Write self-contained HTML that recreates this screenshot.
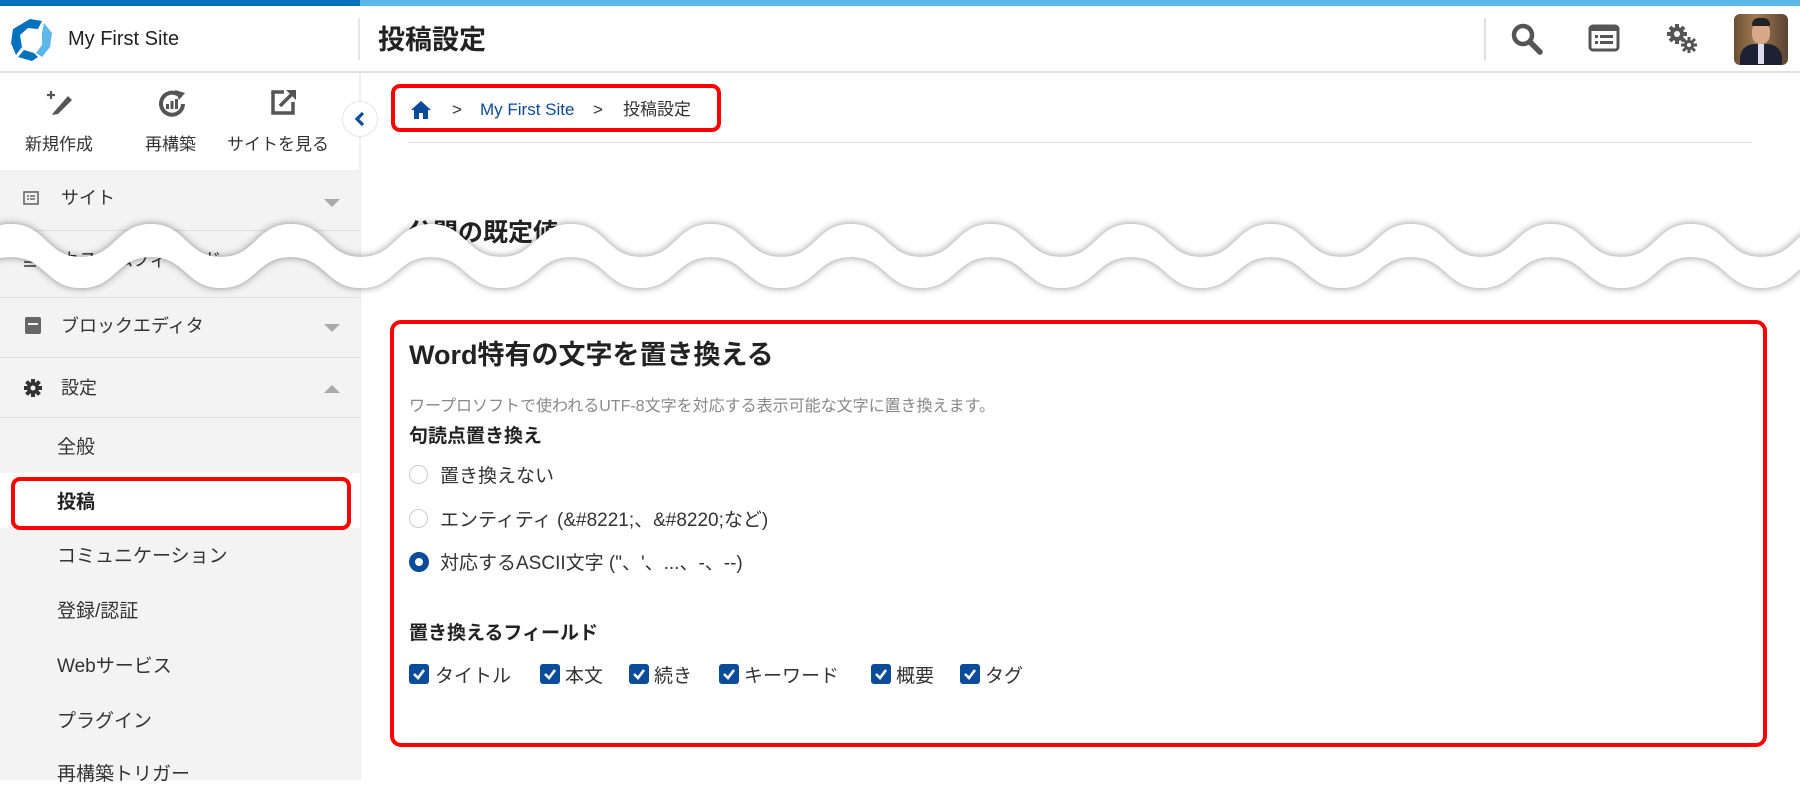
<!DOCTYPE html>
<html><head><meta charset="utf-8">
<style>
*{margin:0;padding:0;box-sizing:border-box}
body{width:1800px;height:780px;overflow:hidden;background:#fff;font-family:"Liberation Sans","Noto Sans CJK JP",sans-serif;color:#333;position:relative}
.a{position:absolute}
.t{position:absolute;white-space:nowrap;line-height:1.6}
</style></head><body>
<div class="a" style="left:0;top:0;width:360px;height:6px;background:#0071bc"></div>
<div class="a" style="left:360px;top:0;width:1440px;height:6px;background:#5bb8e8"></div>
<div class="a" style="left:0;top:71px;width:1800px;height:2px;background:#e0e0e0"></div>
<svg class="a" style="left:8px;top:17px" width="48" height="46" viewBox="0 0 48 46">
<path d="M22 2 L34 4 L30 12 L20 11 L12 18 L14 30 L8 38 L3 26 L5 12 Z" fill="#0071bc"/>
<path d="M36 6 L44 16 L42 30 L34 40 L28 36 L34 28 L34 16 Z" fill="#5bb8e8"/>
<path d="M10 40 L16 33 L26 36 L30 40 L24 44 Z" fill="#0071bc"/>
</svg>
<div class="t" style="left:68px;top:23px;font-size:20px;color:#222">My First Site</div>
<div class="a" style="left:358px;top:18px;width:2px;height:42px;background:#e6e6e6"></div>
<div class="t" style="left:378px;top:19px;font-size:27px;font-weight:bold;color:#222">投稿設定</div>
<div class="a" style="left:1484px;top:18px;width:2px;height:42px;background:#e0e0e0"></div>
<svg class="a" style="left:1510px;top:22px" width="34" height="34" viewBox="0 0 34 34"><circle cx="13" cy="13" r="9" fill="none" stroke="#555" stroke-width="4.5"/><path d="M20 20 L30 30" stroke="#555" stroke-width="5.5" stroke-linecap="round"/></svg>
<svg class="a" style="left:1588px;top:24px" width="32" height="28" viewBox="0 0 32 28"><rect x="2" y="2" width="28" height="24" rx="3" fill="none" stroke="#555" stroke-width="3"/><rect x="2" y="2" width="28" height="5" fill="#555"/><rect x="7" y="11" width="3" height="3" fill="#555"/><rect x="12" y="11" width="13" height="3" fill="#555"/><rect x="7" y="17" width="3" height="3" fill="#555"/><rect x="12" y="17" width="13" height="3" fill="#555"/></svg>
<svg class="a" style="left:1666px;top:23px" width="32" height="30" viewBox="0 0 32 30"><g fill="#555"><circle cx="11" cy="11" r="7"/><g stroke="#555" stroke-width="4"><path d="M11 1v20M1 11h20M4 4l14 14M18 4L4 18"/></g><circle cx="23" cy="22" r="5"/><g stroke="#555" stroke-width="3"><path d="M23 14v16M15 22h16M17 16l12 12M29 16L17 28"/></g></g><circle cx="11" cy="11" r="3" fill="#fff"/><circle cx="23" cy="22" r="2" fill="#fff"/></svg>
<div class="a" style="left:1734px;top:14px;width:54px;height:51px;border-radius:6px;background:linear-gradient(90deg,#6b4f33,#a07a52 40%,#5a4330);overflow:hidden"><div class="a" style="left:18px;top:8px;width:18px;height:22px;border-radius:9px;background:#d8a888"></div><div class="a" style="left:18px;top:4px;width:18px;height:8px;border-radius:8px 8px 2px 2px;background:#222"></div><div class="a" style="left:6px;top:30px;width:42px;height:24px;border-radius:14px 14px 0 0;background:#1c2233"></div><div class="a" style="left:24px;top:30px;width:6px;height:20px;background:#dde"></div></div>

<div class="a" style="left:0;top:73px;width:360px;height:707px;background:#fff"></div>
<div class="a" style="left:359px;top:73px;width:2px;height:707px;background:#eee"></div>
<div class="a" style="left:0;top:170px;width:360px;height:610px;background:#f3f3f3"></div>
<svg class="a" style="left:46px;top:88px" width="30" height="30" viewBox="0 0 30 30"><path d="M8 24 L22 8 L26 12 L12 26 L6 27 Z" fill="#555"/><path d="M5 3v8M1 7h8" stroke="#555" stroke-width="2.2"/></svg>
<div class="t" style="left:25px;top:131px;font-size:17px;color:#333">新規作成</div>
<svg class="a" style="left:156px;top:88px" width="32" height="32" viewBox="0 0 32 32"><path d="M27 16 A11 11 0 1 1 22 6.5" fill="none" stroke="#555" stroke-width="4"/><path d="M19 2 L29 5 L23 12 Z" fill="#555"/><rect x="10" y="16" width="3" height="5" fill="#555"/><rect x="14.5" y="13" width="3" height="8" fill="#555"/><rect x="19" y="11" width="3" height="10" fill="#555"/></svg>
<div class="t" style="left:145px;top:131px;font-size:17px;color:#333">再構築</div>
<svg class="a" style="left:268px;top:88px" width="30" height="30" viewBox="0 0 30 30"><path d="M16 4 H5 V25 H25 V14" fill="none" stroke="#555" stroke-width="3.5"/><path d="M12 18 L26 4" stroke="#555" stroke-width="3.5"/><path d="M18 2 H28 V12 Z" fill="#555"/></svg>
<div class="t" style="left:227px;top:131px;font-size:17px;color:#333">サイトを見る</div>
<div class="a" style="left:342px;top:101px;width:36px;height:36px;border-radius:50%;background:#fff;border:1px solid #e6e6e6"></div>
<svg class="a" style="left:353px;top:110px" width="14" height="18" viewBox="0 0 14 18"><path d="M10 3 L4 9 L10 15" fill="none" stroke="#0a4b9a" stroke-width="3.2"/></svg>

<svg class="a" style="left:23px;top:191px" width="16" height="14" viewBox="0 0 16 14"><rect x="1" y="1" width="14" height="12" fill="none" stroke="#666" stroke-width="1.6"/><path d="M4 5h2M7 5h5M4 8h2M7 8h5" stroke="#666" stroke-width="1.4"/></svg>
<div class="t" style="left:61px;top:184px;font-size:18px;color:#333">サイト</div>
<div class="a" style="left:324px;top:199px;border-left:8px solid transparent;border-right:8px solid transparent;border-top:8px solid #aaa"></div>
<div class="a" style="left:0;top:230px;width:360px;height:1px;background:#ddd"></div>
<div class="t" style="left:61px;top:246px;font-size:18px;color:#333">カスタムフィールド</div>
<div class="a" style="left:24px;top:253px;width:12px;height:16px;background:repeating-linear-gradient(#666 0 2px,transparent 2px 4px)"></div>
<div class="a" style="left:0;top:297px;width:360px;height:1px;background:#ddd"></div>
<div class="a" style="left:25px;top:317px;width:16px;height:17px;border-radius:2px;background:#666"></div><div class="a" style="left:28px;top:323px;width:10px;height:2px;background:#f3f3f3"></div>
<div class="t" style="left:61px;top:312px;font-size:18px;color:#333">ブロックエディタ</div>
<div class="a" style="left:324px;top:324px;border-left:8px solid transparent;border-right:8px solid transparent;border-top:8px solid #aaa"></div>
<div class="a" style="left:0;top:357px;width:360px;height:1px;background:#ddd"></div>
<svg class="a" style="left:23px;top:378px" width="20" height="20" viewBox="0 0 20 20"><g stroke="#333" stroke-width="4"><path d="M10 1v18M1 10h18M3.5 3.5l13 13M16.5 3.5l-13 13"/></g><circle cx="10" cy="10" r="6" fill="#333"/><circle cx="10" cy="10" r="2.5" fill="#f3f3f3"/></svg>
<div class="t" style="left:61px;top:374px;font-size:18px;color:#333">設定</div>
<div class="a" style="left:324px;top:385px;border-left:8px solid transparent;border-right:8px solid transparent;border-bottom:8px solid #aaa"></div>
<div class="a" style="left:0;top:417px;width:360px;height:1px;background:#ddd"></div>
<div class="t" style="left:57px;top:433px;font-size:19px;color:#333">全般</div>
<div class="a" style="left:0;top:473px;width:360px;height:55px;background:#fff"></div>
<div class="a" style="left:11px;top:477px;width:340px;height:53px;border:4px solid #f00;border-radius:9px"></div>
<div class="t" style="left:57px;top:488px;font-size:19px;font-weight:bold;color:#222">投稿</div>
<div class="t" style="left:57px;top:542px;font-size:19px;color:#333">コミュニケーション</div>
<div class="t" style="left:57px;top:597px;font-size:19px;color:#333">登録/認証</div>
<div class="t" style="left:57px;top:652px;font-size:19px;color:#333">Webサービス</div>
<div class="t" style="left:57px;top:707px;font-size:19px;color:#333">プラグイン</div>
<div class="t" style="left:57px;top:760px;font-size:19px;color:#333">再構築トリガー</div>

<div class="a" style="left:391px;top:84px;width:330px;height:48px;border:4px solid #f00;border-radius:9px"></div>
<svg class="a" style="left:410px;top:100px" width="22" height="20" viewBox="0 0 22 20"><path d="M11 1 L21 10 H18 V19 H13 V13 H9 V19 H4 V10 H1 Z" fill="#0a4b9a"/></svg>
<div class="t" style="left:452px;top:96px;font-size:17px;color:#333">&gt;</div>
<div class="t" style="left:480px;top:96px;font-size:17px;color:#0a4b9a">My First Site</div>
<div class="t" style="left:593px;top:96px;font-size:17px;color:#333">&gt;</div>
<div class="t" style="left:623px;top:96px;font-size:17px;color:#333">投稿設定</div>
<div class="a" style="left:408px;top:142px;width:1344px;height:1px;background:#ddd"></div>
<div class="t" style="left:408px;top:213px;font-size:25px;font-weight:bold;color:#222">公開の既定値</div>

<svg class="a" style="left:0;top:200px" width="1800" height="110" viewBox="0 200 1800 110">
<defs><filter id="s" x="-5%" y="-50%" width="110%" height="200%"><feDropShadow dx="0" dy="0" stdDeviation="4" flood-color="#000" flood-opacity="0.45"/></filter></defs>
<path filter="url(#s)" fill="#fff" d="M-129 224 c35 0 35 33 70 33 c35 0 35 -33 70 -33 c35 0 35 33 70 33 c35 0 35 -33 70 -33 c35 0 35 33 70 33 c35 0 35 -33 70 -33 c35 0 35 33 70 33 c35 0 35 -33 70 -33 c35 0 35 33 70 33 c35 0 35 -33 70 -33 c35 0 35 33 70 33 c35 0 35 -33 70 -33 c35 0 35 33 70 33 c35 0 35 -33 70 -33 c35 0 35 33 70 33 c35 0 35 -33 70 -33 c35 0 35 33 70 33 c35 0 35 -33 70 -33 c35 0 35 33 70 33 c35 0 35 -33 70 -33 c35 0 35 33 70 33 c35 0 35 -33 70 -33 c35 0 35 33 70 33 c35 0 35 -33 70 -33 c35 0 35 33 70 33 c35 0 35 -33 70 -33 c35 0 35 33 70 33 c35 0 35 -33 70 -33 L1831 257 c-35 0 -35 31 -70 31 c-35 0 -35 -31 -70 -31 c-35 0 -35 31 -70 31 c-35 0 -35 -31 -70 -31 c-35 0 -35 31 -70 31 c-35 0 -35 -31 -70 -31 c-35 0 -35 31 -70 31 c-35 0 -35 -31 -70 -31 c-35 0 -35 31 -70 31 c-35 0 -35 -31 -70 -31 c-35 0 -35 31 -70 31 c-35 0 -35 -31 -70 -31 c-35 0 -35 31 -70 31 c-35 0 -35 -31 -70 -31 c-35 0 -35 31 -70 31 c-35 0 -35 -31 -70 -31 c-35 0 -35 31 -70 31 c-35 0 -35 -31 -70 -31 c-35 0 -35 31 -70 31 c-35 0 -35 -31 -70 -31 c-35 0 -35 31 -70 31 c-35 0 -35 -31 -70 -31 c-35 0 -35 31 -70 31 c-35 0 -35 -31 -70 -31 c-35 0 -35 31 -70 31 c-35 0 -35 -31 -70 -31 c-35 0 -35 31 -70 31 c-35 0 -35 -31 -70 -31 Z"/>
</svg>

<div class="a" style="left:390px;top:320px;width:1377px;height:427px;border:4px solid #f00;border-radius:11px"></div>
<div class="t" style="left:409px;top:334px;font-size:27px;font-weight:bold;color:#222">Word特有の文字を置き換える</div>
<div class="t" style="left:409px;top:394px;font-size:16px;color:#888">ワープロソフトで使われるUTF-8文字を対応する表示可能な文字に置き換えます。</div>
<div class="t" style="left:409px;top:422px;font-size:19px;font-weight:bold;color:#222">句読点置き換え</div>
<div class="a" style="left:409px;top:465px;width:19px;height:19px;border-radius:50%;border:1.5px solid #ccc;background:#fff"></div>
<div class="t" style="left:440px;top:462px;font-size:19px;color:#333">置き換えない</div>
<div class="a" style="left:409px;top:509px;width:19px;height:19px;border-radius:50%;border:1.5px solid #ccc;background:#fff"></div>
<div class="t" style="left:440px;top:506px;font-size:19px;color:#333">エンティティ (&amp;#8221;、&amp;#8220;など)</div>
<div class="a" style="left:409px;top:552px;width:20px;height:20px;border-radius:50%;border:6px solid #0a4b9a;background:#fff"></div>
<div class="t" style="left:440px;top:549px;font-size:19px;color:#333">対応するASCII文字 (&quot;、'、...、-、--)</div>
<div class="t" style="left:409px;top:619px;font-size:19px;font-weight:bold;color:#222">置き換えるフィールド</div>
<svg width="0" height="0" style="position:absolute"><defs><symbol id="cb" viewBox="0 0 20 20"><rect x="0" y="0" width="20" height="20" rx="3" fill="#0a4b9a"/><path d="M5 10 L9 14 L15 6" fill="none" stroke="#fff" stroke-width="2.6"/></symbol></defs></svg>
<svg class="a" style="left:409px;top:664px" width="20" height="20"><use href="#cb"/></svg><div class="t" style="left:435px;top:662px;font-size:19px;color:#333">タイトル</div>
<svg class="a" style="left:540px;top:664px" width="20" height="20"><use href="#cb"/></svg><div class="t" style="left:565px;top:662px;font-size:19px;color:#333">本文</div>
<svg class="a" style="left:629px;top:664px" width="20" height="20"><use href="#cb"/></svg><div class="t" style="left:654px;top:662px;font-size:19px;color:#333">続き</div>
<svg class="a" style="left:719px;top:664px" width="20" height="20"><use href="#cb"/></svg><div class="t" style="left:744px;top:662px;font-size:19px;color:#333">キーワード</div>
<svg class="a" style="left:871px;top:664px" width="20" height="20"><use href="#cb"/></svg><div class="t" style="left:896px;top:662px;font-size:19px;color:#333">概要</div>
<svg class="a" style="left:960px;top:664px" width="20" height="20"><use href="#cb"/></svg><div class="t" style="left:985px;top:662px;font-size:19px;color:#333">タグ</div>
</body></html>
